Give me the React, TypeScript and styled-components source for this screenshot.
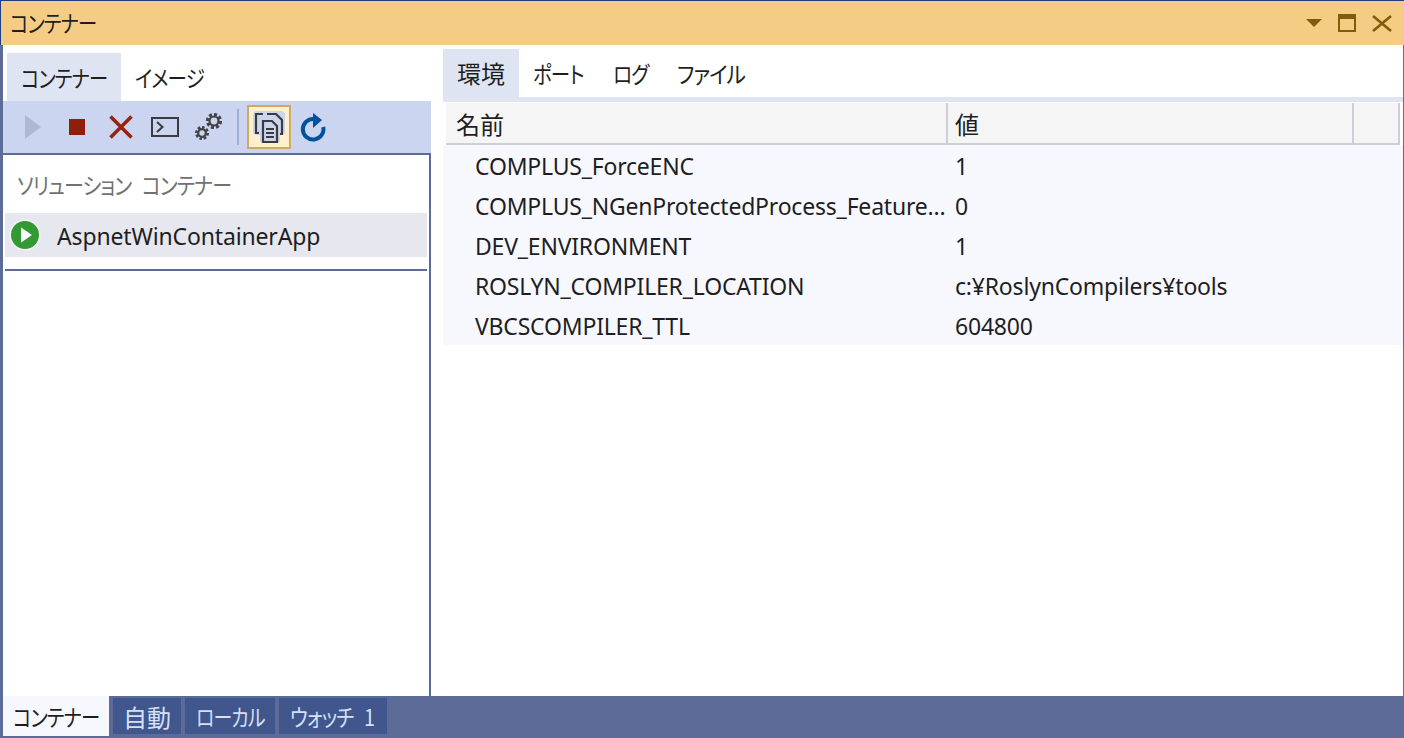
import React from "react";
import styled, { createGlobalStyle } from "styled-components";

const Global = createGlobalStyle`
  html, body { margin: 0; padding: 0; background: #fff; overflow: hidden; }
  #root { width: 1404px; height: 738px; }
`;
const FONT = `"Noto Sans", "Noto Sans CJK JP", sans-serif`;
const KANA = `"Noto Sans CJK JP", "Noto Sans", sans-serif`;

const Window = styled.div`
  width: 1404px; height: 738px; box-sizing: border-box;
  display: flex; flex-direction: column;
  font-family: ${FONT}; font-size: 23px; color: #1e1e1e;
  background: #5d6b99; border-top: 1px solid #1e3f7f; overflow: hidden;
`;
/* Yu Gothic UI kana are narrow: the box holds the final width, the glyphs are condensed into it */
const Kana = styled.span<{ $w: number; $sx?: number }>`
  display: inline-block; width: ${p => p.$w}px; flex: none;
  font-family: ${KANA}; font-size: 23px; font-feature-settings: "palt"; letter-spacing: -1px;
  white-space: nowrap; transform-origin: left center; transform: scaleX(${p => p.$sx ?? 0.84});
`;
const Kanji = styled.span`font-family: ${KANA}; font-size: 24px; white-space: nowrap;`;
const TitleBar = styled.header`
  height: 44px; flex: none; background: #f5cc84; display: flex; align-items: center;
  padding: 0 12px 2px 9px; border-left: 1px solid #1e3f7f; box-sizing: border-box;
`;
const WinButtons = styled.div`display: flex; align-items: center; gap: 16px; margin-left: auto; padding-top: 2px;`;
const Body = styled.div`
  flex: 1; min-height: 0; display: flex; background: #fff;
  margin: 0 1px 0 3px;
`;
const LeftPane = styled.section`
  width: 428px; flex: none; display: flex; flex-direction: column;
`;
const TabStrip = styled.div<{ $left: number; $top: number }>`
  display: flex; padding: ${p => p.$top}px 0 0 ${p => p.$left}px; flex: none;
`;
const Tab = styled.div<{ $active?: boolean }>`
  height: 48px; padding: 0 14px 1px; display: flex; align-items: center; box-sizing: border-box;
  background: ${p => (p.$active ? "#dee4f2" : "transparent")};
`;
const Toolbar = styled.div`
  height: 52px; flex: none; background: #ccd5f0; display: flex; align-items: center;
  padding-left: 8px; box-sizing: border-box;
`;
const ToolIcon = styled.div`
  width: 44px; height: 44px; flex: none;
  display: flex; align-items: center; justify-content: center;
`;
const Separator = styled.div`
  width: 2px; height: 36px; margin: 0 8px 0 6px; background: #a0afd6; flex: none;
`;
const ToggleOn = styled.div`
  width: 44px; height: 44px; box-sizing: border-box; flex: none;
  background: #fff0cc; border: 2px solid #d3a863;
  display: flex; align-items: center; justify-content: center;
`;
const ListBox = styled.div`
  flex: 1; min-height: 0; border-top: 2px solid #5d6b99; border-right: 2px solid #5d6b99;
  padding: 0 2px; box-sizing: border-box; display: flex; flex-direction: column;
`;
const ListCaption = styled.div`
  height: 58px; display: flex; align-items: center; padding-left: 12px;
  color: #717171; flex: none;
`;
const WideKana = styled(Kana)`word-spacing: 8px;`;
const ProjectRow = styled.div`
  height: 44px; flex: none; background: #e6e7ef; display: flex; align-items: center;
  gap: 16px; padding-left: 4px; width: 422px; box-sizing: border-box; letter-spacing: -0.15px;
`;
const ProjectName = styled.span`padding-top: 2px;`;
const Divider = styled.div`height: 2px; width: 422px; background: #5d6b99; margin-top: 12px; flex: none;`;

const RightPane = styled.section`
  flex: 1; min-width: 0; display: flex; flex-direction: column; padding-left: 12px;
`;
const RightRule = styled.div`height: 5px; background: #dee4f2; flex: none;`;
const HeaderRow = styled.div`
  height: 42px; margin: 1px 3px 0 3px; background: #f5f5f5; flex: none; box-sizing: border-box;
  border-bottom: 2px solid #cccedb; border-right: 2px solid #cccedb;
  display: grid; grid-template-columns: 502px 406px 1fr;
`;
const HeaderCell = styled.div<{ $pad: number; $last?: boolean }>`
  display: flex; align-items: center; padding-left: ${p => p.$pad}px; box-sizing: border-box;
  border-right: ${p => (p.$last ? "none" : "2px solid #cccedb")};
`;
const Rows = styled.div`background: #f7f8fe; flex: none;`;
const Row = styled.div`
  height: 40px; display: grid; grid-template-columns: 512px 1fr; align-items: center;
  letter-spacing: -0.2px; padding-top: 2px; box-sizing: border-box;
`;
const NameCell = styled.div`padding-left: 32px; white-space: nowrap;`;
const ValueCell = styled.div`white-space: nowrap;`;

const BottomBar = styled.footer`
  height: 42px; flex: none; margin-left: 3px; display: flex; align-items: flex-start; gap: 4px;
  background: #5d6b99;
`;
const BottomActive = styled.div`
  width: 106px; height: 40px; background: #f7f8fe; display: flex; align-items: center;
  justify-content: center;
`;
const BottomTab = styled.div<{ $w: number }>`
  width: ${p => p.$w}px; height: 36px; margin-top: 2px; background: #40568d; color: #d6e0f5;
  display: flex; align-items: center; justify-content: center;
`;

const Play = () => (
  <svg width="16" height="24" viewBox="0 0 16 24"><path d="M0 0l16 12L0 24z" fill="#b0b8cf" /></svg>
);
const Stop = () => (
  <svg width="16" height="16" viewBox="0 0 16 16"><rect width="16" height="16" fill="#8e1f0a" /></svg>
);
const Cross = () => (
  <svg width="24" height="24" viewBox="0 0 24 24"><path d="M1.500 1.500l21 21M22.500 1.500l-21 21" stroke="#962410" strokeWidth="3.600" /></svg>
);
const Terminal = () => (
  <svg width="28" height="20" viewBox="0 0 28 20" fill="none" stroke="#3c3c40" strokeWidth="2">
    <rect x="1" y="1" width="26" height="18" /><path d="M6 5l5.500 5L6 15" />
  </svg>
);
const Gear = ({ x, y, r, tooth }: { x: number; y: number; r: number; tooth: number }) => (
  <g fill="none" stroke="#424245">
    <circle cx={x} cy={y} r={r} strokeWidth="2.200" />
    <circle cx={x} cy={y} r={r + tooth / 2 + 0.6} strokeWidth={tooth} pathLength={16} strokeDasharray="1.200 0.800" />
  </g>
);
const Gears = () => (
  <svg width="30" height="30" viewBox="0 0 30 30">
    <Gear x={20} y={9} r={4.500} tooth={3} />
    <Gear x={8} y={21} r={3.800} tooth={2.600} />
  </svg>
);
const CopyDocs = () => (
  <svg width="32" height="32" viewBox="0 0 32 32" fill="none">
    <rect x="0" y="0" width="32" height="24" rx="4" fill="#ccd5f0" />
    <rect x="7" y="8" width="20" height="24" rx="3" fill="#ccd5f0" />
    <path d="M10 3H3v19h3" stroke="#3c3c40" strokeWidth="2.200" />
    <path d="M14 3h9l6 6v14h-2" stroke="#3c3c40" strokeWidth="2.200" />
    <path d="M10 10h9l5 5v16H10z" stroke="#3c3c40" strokeWidth="2.200" />
    <path d="M13 18h8M13 22h8M13 26h8" stroke="#3c3c40" strokeWidth="1.800" />
  </svg>
);
const Refresh = () => (
  <svg width="26" height="30" viewBox="0 0 26 30" fill="none">
    <path d="M14 7A10.300 10.300 0 1 0 23.200 15" stroke="#00529c" strokeWidth="4" />
    <path d="M13 1v15l9-8z" fill="#00529c" />
  </svg>
);
const RunBadge = () => (
  <svg width="32" height="32" viewBox="0 0 32 32">
    <circle cx="16" cy="16" r="15.500" fill="#f4f5f8" />
    <circle cx="16" cy="16" r="14" fill="#339933" />
    <path d="M12 8.500l11 7.500-11 7.500z" fill="#fff" />
  </svg>
);
const Caret = () => (
  <svg width="16" height="8" viewBox="0 0 16 8"><path d="M0 0h16L8 8z" fill="#835b0a" /></svg>
);
const MaxIcon = () => (
  <svg width="18" height="18" viewBox="0 0 18 18" fill="none">
    <rect x="1" y="1" width="16" height="16" stroke="#835b0a" strokeWidth="2" /><rect width="18" height="5" fill="#835b0a" />
  </svg>
);
const CloseIcon = () => (
  <svg width="20" height="17" viewBox="0 0 20 17"><path d="M1 1l18 15M19 1L1 16" stroke="#835b0a" strokeWidth="2.600" /></svg>
);

const envRows: [string, string][] = [
  ["COMPLUS_ForceENC", "1"],
  ["COMPLUS_NGenProtectedProcess_Feature...", "0"],
  ["DEV_ENVIRONMENT", "1"],
  ["ROSLYN_COMPILER_LOCATION", "c:¥RoslynCompilers¥tools"],
  ["VBCSCOMPILER_TTL", "604800"],
];

export default function App() {
  return (
    <Window>
      <Global />
      <TitleBar>
        <Kana $w={86}>コンテナー</Kana>
        <WinButtons>
          <Caret />
          <MaxIcon />
          <CloseIcon />
        </WinButtons>
      </TitleBar>
      <Body>
        <LeftPane>
          <TabStrip $left={4} $top={8}>
            <Tab $active><Kana $w={86}>コンテナー</Kana></Tab>
            <Tab><Kana $w={69} $sx={0.85}>イメージ</Kana></Tab>
          </TabStrip>
          <Toolbar>
            <ToolIcon><Play /></ToolIcon>
            <ToolIcon><Stop /></ToolIcon>
            <ToolIcon><Cross /></ToolIcon>
            <ToolIcon><Terminal /></ToolIcon>
            <ToolIcon><Gears /></ToolIcon>
            <Separator />
            <ToggleOn><CopyDocs /></ToggleOn>
            <ToolIcon><Refresh /></ToolIcon>
          </Toolbar>
          <ListBox>
            <ListCaption><WideKana $w={211} $sx={0.87}>ソリューション コンテナー</WideKana></ListCaption>
            <ProjectRow>
              <RunBadge />
              <ProjectName>AspnetWinContainerApp</ProjectName>
            </ProjectRow>
            <Divider />
          </ListBox>
        </LeftPane>
        <RightPane>
          <TabStrip $left={0} $top={4}>
            <Tab $active><Kanji>環境</Kanji></Tab>
            <Tab><Kana $w={52} $sx={0.85}>ポート</Kana></Tab>
            <Tab><Kana $w={36} $sx={0.86}>ログ</Kana></Tab>
            <Tab><Kana $w={68} $sx={0.9}>ファイル</Kana></Tab>
          </TabStrip>
          <RightRule />
          <HeaderRow>
            <HeaderCell $pad={10}><Kanji>名前</Kanji></HeaderCell>
            <HeaderCell $pad={7}><Kanji>値</Kanji></HeaderCell>
            <HeaderCell $pad={0} $last />
          </HeaderRow>
          <Rows>
            {envRows.map(([n, v]) => (
              <Row key={n}>
                <NameCell>{n}</NameCell>
                <ValueCell>{v}</ValueCell>
              </Row>
            ))}
          </Rows>
        </RightPane>
      </Body>
      <BottomBar>
        <BottomActive><Kana $w={86}>コンテナー</Kana></BottomActive>
        <BottomTab $w={68}><Kanji>自動</Kanji></BottomTab>
        <BottomTab $w={90}><Kana $w={68} $sx={0.82}>ローカル</Kana></BottomTab>
        <BottomTab $w={108}><WideKana $w={87} $sx={0.86}>ウォッチ 1</WideKana></BottomTab>
      </BottomBar>
    </Window>
  );
}
